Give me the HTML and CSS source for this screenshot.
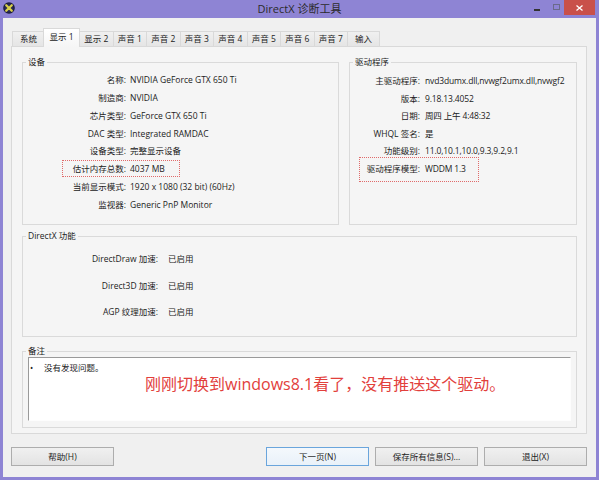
FILE: index.html
```html
<!DOCTYPE html>
<html lang="zh-CN">
<head>
<meta charset="utf-8">
<title>DirectX 诊断工具</title>
<link rel="stylesheet" href="styles.css">
</head>
<body>
<div class="window">
  <div class="titlebar">
    <svg class="appicon" viewBox="0 0 12 12" width="12" height="12">
      <circle cx="6" cy="6" r="5.8" fill="#1c1c3c"/>
      <circle cx="6" cy="6" r="4.6" fill="#2a2a55"/>
      <path d="M3.2 3.2 L8.8 8.8 M8.8 3.2 L3.2 8.8" stroke="#d9d04a" stroke-width="2.2" stroke-linecap="round"/>
    </svg>
    <div class="title">DirectX 诊断工具</div>
    <div class="controls">
      <span class="ctl min"></span>
      <span class="ctl max"></span>
      <span class="ctl close">
        <svg viewBox="0 0 7 6" width="7" height="6"><path d="M0.5 0.5 L6.5 5.5 M6.5 0.5 L0.5 5.5" stroke="#fff" stroke-width="1.3"/></svg>
      </span>
    </div>
  </div>
  <div class="client">
    <div class="tabs">
      <div class="tab narrow">系统</div>
      <div class="tab active">显示 1</div>
      <div class="tab">显示 2</div>
      <div class="tab">声音 1</div>
      <div class="tab">声音 2</div>
      <div class="tab">声音 3</div>
      <div class="tab">声音 4</div>
      <div class="tab">声音 5</div>
      <div class="tab">声音 6</div>
      <div class="tab">声音 7</div>
      <div class="tab narrow">输入</div>
    </div>
    <div class="panel">
      <div class="toprow">
        <fieldset class="group device">
          <legend>设备</legend>
          <div class="rows">
            <div class="row"><span class="lbl">名称:</span><span class="val">NVIDIA GeForce GTX 650 Ti</span></div>
            <div class="row"><span class="lbl">制造商:</span><span class="val">NVIDIA</span></div>
            <div class="row"><span class="lbl">芯片类型:</span><span class="val">GeForce GTX 650 Ti</span></div>
            <div class="row"><span class="lbl">DAC 类型:</span><span class="val">Integrated RAMDAC</span></div>
            <div class="row"><span class="lbl">设备类型:</span><span class="val">完整显示设备</span></div>
            <div class="row mark"><span class="lbl">估计内存总数:</span><span class="val">4037 MB</span></div>
            <div class="row"><span class="lbl">当前显示模式:</span><span class="val">1920 x 1080 (32 bit) (60Hz)</span></div>
            <div class="row"><span class="lbl">监视器:</span><span class="val">Generic PnP Monitor</span></div>
          </div>
        </fieldset>
        <fieldset class="group driver">
          <legend>驱动程序</legend>
          <div class="rows">
            <div class="row"><span class="lbl">主驱动程序:</span><span class="val">nvd3dumx.dll,nvwgf2umx.dll,nvwgf2</span></div>
            <div class="row"><span class="lbl">版本:</span><span class="val">9.18.13.4052</span></div>
            <div class="row"><span class="lbl">日期:</span><span class="val">周四 上午 4:48:32</span></div>
            <div class="row"><span class="lbl">WHQL 签名:</span><span class="val">是</span></div>
            <div class="row"><span class="lbl">功能级别:</span><span class="val">11.0,10.1,10.0,9.3,9.2,9.1</span></div>
            <div class="row mark"><span class="lbl">驱动程序模型:</span><span class="val">WDDM 1.3</span></div>
          </div>
        </fieldset>
      </div>
      <fieldset class="group dx">
        <legend>DirectX 功能</legend>
        <div class="rows">
          <div class="row"><span class="lbl">DirectDraw 加速:</span><span class="val">已启用</span></div>
          <div class="row"><span class="lbl">Direct3D 加速:</span><span class="val">已启用</span></div>
          <div class="row"><span class="lbl">AGP 纹理加速:</span><span class="val">已启用</span></div>
        </div>
      </fieldset>
      <fieldset class="group notes">
        <legend>备注</legend>
        <div class="notebox">
          <div class="note-item"><span class="bullet">•</span><span>没有发现问题。</span></div>
          <div class="annot">刚刚切换到windows8.1看了，没有推送这个驱动。</div>
        </div>
      </fieldset>
    </div>
    <div class="buttons">
      <div class="btn">帮助(H)</div>
      <div class="btn default next">下一页(N)</div>
      <div class="btn">保存所有信息(S)...</div>
      <div class="btn">退出(X)</div>
    </div>
  </div>
</div>
</body>
</html>
```
FILE: styles.css
```css
html, body {
  margin: 0;
  padding: 0;
}
body {
  width: 599px;
  height: 480px;
  overflow: hidden;
  background: #8e84d4;
  font-family: "Open Sans", "Noto Sans CJK SC", sans-serif;
  font-size: 8.5px;
  color: #222;
}
.window {
  display: flex;
  flex-direction: column;
  height: 480px;
}
.titlebar {
  height: 18px;
  display: grid;
  grid-template-columns: 1fr auto 1fr;
  align-items: start;
}
.appicon {
  display: block;
  margin: 2px 0 0 3px;
}
.title {
  font-size: 11px;
  line-height: 18px;
  color: #2b2b2b;
}
.controls {
  justify-self: end;
  display: flex;
  margin-right: 4px;
}
.ctl {
  height: 15px;
  display: flex;
  align-items: center;
  justify-content: center;
}
.ctl.min { width: 22px; }
.ctl.min::before {
  content: "";
  width: 6px;
  height: 2px;
  background: #333;
  margin-top: 5px;
}
.ctl.max { width: 16px; }
.ctl.max::before {
  content: "";
  width: 5px;
  height: 4px;
  border: 1px solid #6a6a8a;
  margin-top: -1px;
}
.ctl.close {
  width: 31px;
  background: #c9504a;
}
.ctl.close svg { display: block; }

.client {
  flex: 1;
  margin: 0 3px 3px;
  background: #f0f0f0;
  padding: 10px 9px 11px 8px;
  display: flex;
  flex-direction: column;
}
.tabs {
  display: flex;
  align-items: flex-end;
  height: 18px;
  padding-left: 1px;
  position: relative;
  z-index: 1;
}
.tab {
  box-sizing: border-box;
  height: 15px;
  min-width: 34.5px;
  padding: 0 4px;
  margin-right: -1px;
  border: 1px solid #d9d9d9;
  border-bottom: none;
  background: linear-gradient(#f0f0f0, #e5e5e5);
  line-height: 14px;
  text-align: center;
  white-space: nowrap;
}
.tab.narrow { min-width: 33px; }
.tab.active {
  height: 19px;
  min-width: 37px;
  margin-bottom: -1px;
  margin-left: -1px;
  background: linear-gradient(#ffffff, #f5f5f5);
  line-height: 16px;
}
.panel {
  box-sizing: border-box;
  height: 388px;
  border: 1px solid #d9d9d9;
  background: #f5f5f5;
  padding: 9px 9px 0 10px;
  display: flex;
  flex-direction: column;
}
.toprow {
  display: flex;
  gap: 10px;
  height: 169px;
}
.group {
  box-sizing: border-box;
  margin: 0;
  padding: 0;
  min-width: 0;
  border: 1px solid #dadada;
}
.group legend {
  margin-left: 3px;
  padding: 0 2px;
  line-height: 12px;
}
.device { width: 317px; height: 169px; }
.driver { width: 228px; height: 169px; }
.rows { padding-top: 3px; }
.row {
  display: flex;
  position: relative;
  white-space: nowrap;
  height: 17.86px;
  line-height: 17.86px;
}
.lbl {
  flex: none;
  text-align: right;
}
.device .lbl { width: 103px; }
.device .val { margin-left: 4px; }
.driver .rows { padding-top: 4px; }
.driver .row { height: 17.6px; line-height: 17.6px; }
.driver .lbl { width: 70px; }
.driver .val {
  margin-left: 5px;
  letter-spacing: -0.15px;
}
.mark::after {
  content: "";
  position: absolute;
  box-sizing: border-box;
  border: 1px dotted #e06a6a;
}
.device .mark::after { left: 39px; top: 0; width: 118px; height: 17px; }
.driver .mark::after { left: 9px; top: -3px; width: 120px; height: 25px; }

.dx {
  margin-top: 5px;
  height: 107px;
}
.dx .rows { padding-top: 4px; }
.dx .row { height: 26.5px; line-height: 26.5px; }
.dx .lbl { width: 135px; }
.dx .val { margin-left: 10px; }

.notes {
  margin-top: 8px;
  height: 83px;
}
.notebox {
  position: relative;
  box-sizing: border-box;
  height: 64px;
  margin: 0 5px;
  background: #fff;
  border-top: 1px solid #9a9a9a;
  border-left: 1px solid #9a9a9a;
  border-right: 1px solid #fdfdfd;
  border-bottom: 1px solid #fdfdfd;
}
.note-item {
  display: flex;
  padding: 3px 0 0 1px;
  line-height: 14px;
}
.bullet { width: 14px; }
.annot {
  position: absolute;
  left: 116px;
  top: 16px;
  font-family: "Open Sans", "Noto Sans CJK SC", sans-serif;
  font-size: 16px;
  line-height: 20px;
  color: #e2403c;
  white-space: nowrap;
}
.buttons {
  display: flex;
  gap: 6px;
  margin-top: 13px;
  height: 19px;
}
.btn {
  box-sizing: border-box;
  width: 103px;
  height: 19px;
  border: 1px solid #adadad;
  background: linear-gradient(#f0f0f0, #e3e3e3);
  line-height: 17px;
  text-align: center;
  white-space: nowrap;
}
.btn.next { margin-left: auto; }
.btn.default {
  border-color: #6aa5dc;
  background: linear-gradient(#f4f8fc, #e9f1f9);
}
```
